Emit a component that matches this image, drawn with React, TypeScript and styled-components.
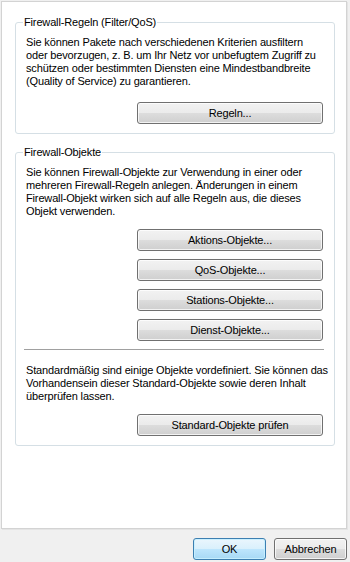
import React from 'react';
import styled, { createGlobalStyle } from 'styled-components';

const GlobalStyle = createGlobalStyle`
  html, body {
    margin: 0;
    padding: 0;
    background: #f0f0f0;
  }
  body {
    font-family: "Liberation Sans", Arial, sans-serif;
    font-size: 11px;
    letter-spacing: -0.15px;
    color: #000;
  }
`;

const Window = styled.div`
  width: 350px;
  height: 562px;
  box-sizing: border-box;
  padding-top: 1px;
  display: flex;
  flex-direction: column;
  background: #f0f0f0;
`;

const TabPage = styled.div`
  margin-left: 1px;
  width: 346px;
  height: 528px;
  box-sizing: border-box;
  padding: 14px 11px 0 13px;
  background: #fff;
  border: 1px solid #d3d3d3;
  box-shadow: 1px 1px 0 #e4e4e4;
  display: flex;
  flex-direction: column;
  gap: 12px;
`;

const Group = styled.fieldset`
  margin: 0;
  min-width: 0;
  padding: 7px 11px 9px 10px;
  border: 1px solid #d5dfe5;
  border-radius: 3px;
  display: flex;
  flex-direction: column;
`;

const Legend = styled.legend`
  margin-left: -3px;
  padding: 0 1px;
  line-height: 13px;
  color: #000;
`;

const Text = styled.p`
  margin: ${(p: { $top?: number }) => p.$top ?? 0}px 0 0;
  line-height: 13px;
  white-space: nowrap;
`;

const ButtonStack = styled.div`
  margin-top: ${(p: { $top: number }) => p.$top}px;
  display: flex;
  flex-direction: column;
  align-items: flex-end;
  gap: 8px;
`;

const Button = styled.button<{ $primary?: boolean; $width?: number }>`
  width: ${(p) => p.$width ?? 186}px;
  height: 22px;
  box-sizing: border-box;
  padding: 0;
  font: inherit;
  letter-spacing: inherit;
  color: #000;
  border: 1px solid ${(p) => (p.$primary ? '#3c7fb1' : '#707070')};
  border-radius: 3px;
  background: ${(p) =>
    p.$primary
      ? 'linear-gradient(to bottom, #eaf6fd 0%, #d9f0fc 50%, #bee6fd 50%, #a7d9f5 100%)'
      : 'linear-gradient(to bottom, #f2f2f2 0%, #ebebeb 50%, #dddddd 50%, #cfcfcf 100%)'};
  box-shadow: inset 0 0 0 1px ${(p) => (p.$primary ? 'rgba(200, 240, 255, 0.9)' : 'rgba(255, 255, 255, 0.75)')};
`;

const Separator = styled.hr`
  margin: 8px -1px 0 -2px;
  border: 0;
  border-top: 1px solid #a0a0a0;
  border-bottom: 1px solid #fff;
  height: 0;
`;

const Footer = styled.div`
  display: flex;
  justify-content: flex-end;
  gap: 8px;
  padding: 9px 3px 0 0;
`;

const App = () => {
  return (
    <Window>
      <GlobalStyle />
      <TabPage>
        <Group>
          <Legend>Firewall-Regeln (Filter/QoS)</Legend>
          <Text>
            Sie können Pakete nach verschiedenen Kriterien ausfiltern
            <br />
            oder bevorzugen, z. B. um Ihr Netz vor unbefugtem Zugriff zu
            <br />
            schützen oder bestimmten Diensten eine Mindestbandbreite
            <br />
            (Quality of Service) zu garantieren.
          </Text>
          <ButtonStack $top={14}>
            <Button>Regeln...</Button>
          </ButtonStack>
        </Group>

        <Group>
          <Legend>Firewall-Objekte</Legend>
          <Text>
            Sie können Firewall-Objekte zur Verwendung in einer oder
            <br />
            mehreren Firewall-Regeln anlegen. Änderungen in einem
            <br />
            Firewall-Objekt wirken sich auf alle Regeln aus, die dieses
            <br />
            Objekt verwenden.
          </Text>
          <ButtonStack $top={11}>
            <Button>Aktions-Objekte...</Button>
            <Button>QoS-Objekte...</Button>
            <Button>Stations-Objekte...</Button>
            <Button>Dienst-Objekte...</Button>
          </ButtonStack>
          <Separator />
          <Text $top={13}>
            Standardmäßig sind einige Objekte vordefiniert. Sie können das
            <br />
            Vorhandensein dieser Standard-Objekte sowie deren Inhalt
            <br />
            überprüfen lassen.
          </Text>
          <ButtonStack $top={11}>
            <Button>Standard-Objekte prüfen</Button>
          </ButtonStack>
        </Group>
      </TabPage>

      <Footer>
        <Button $primary $width={73}>OK</Button>
        <Button $width={73}>Abbrechen</Button>
      </Footer>
    </Window>
  );
};

export default App;
